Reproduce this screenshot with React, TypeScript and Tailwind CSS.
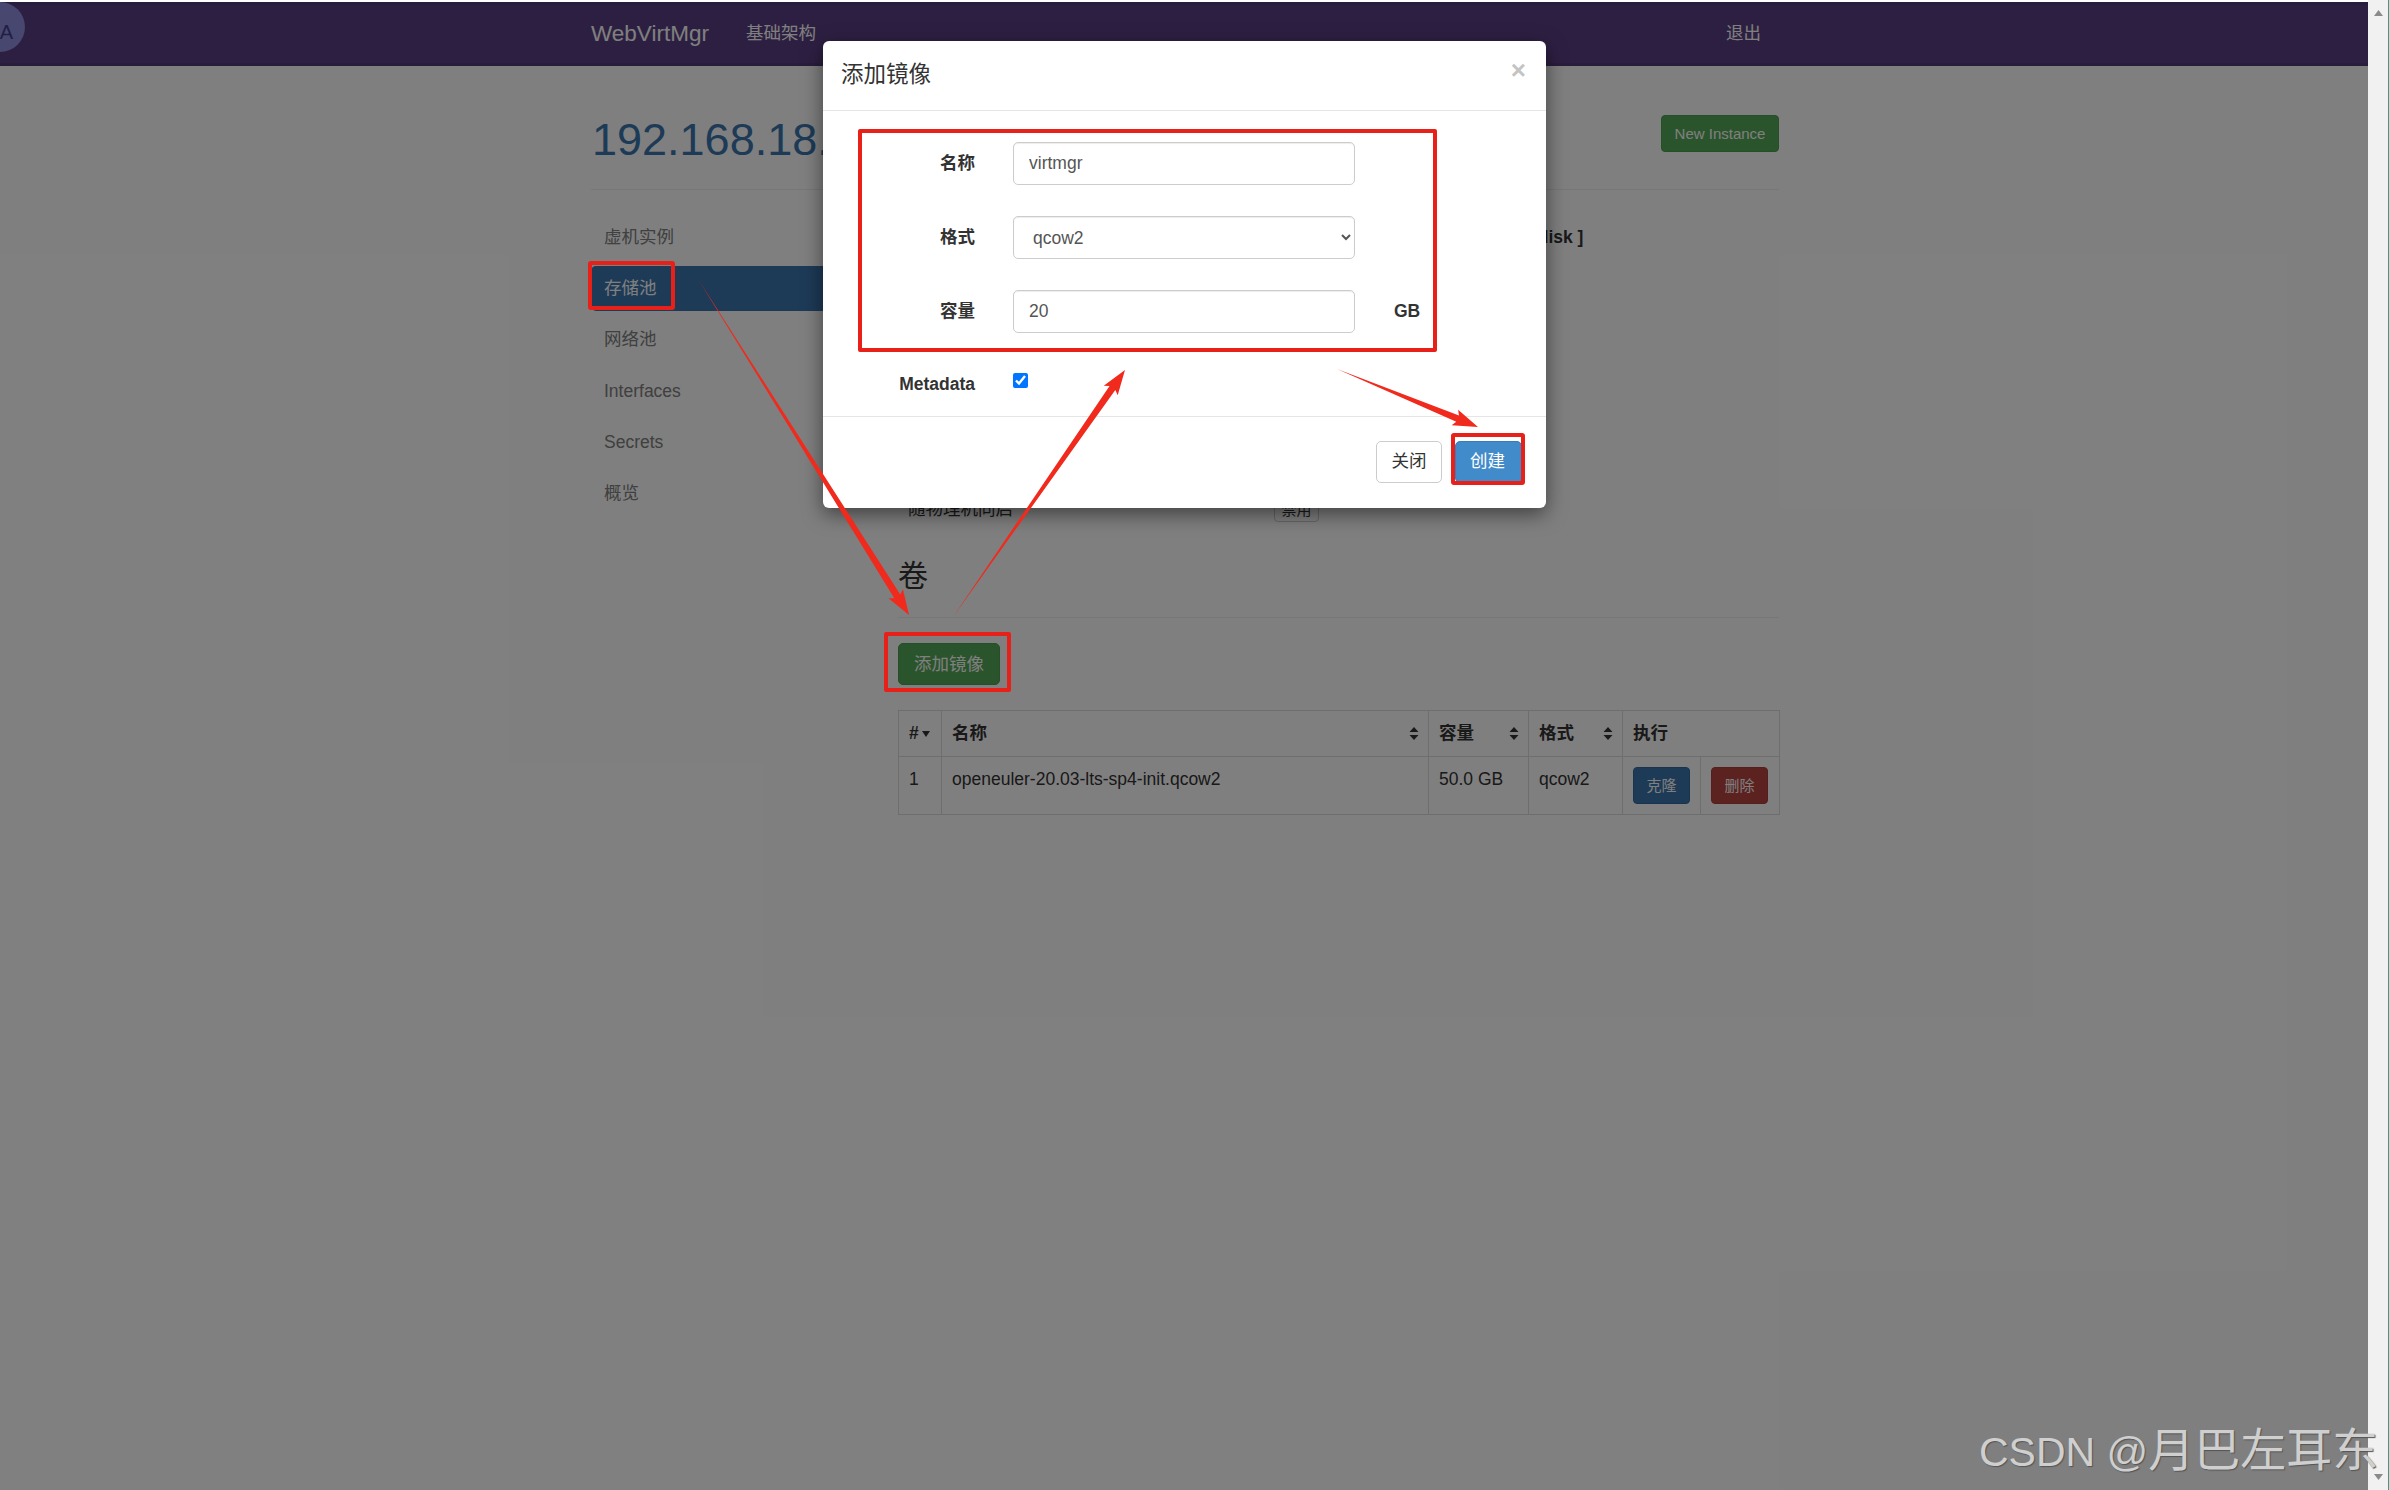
import React from 'react';

const sideItems = ['虚机实例', '存储池', '网络池', 'Interfaces', 'Secrets', '概览'];

function SortIcon() {
  return (
    <svg width="10" height="15" viewBox="0 0 10 15" className="shrink-0 mr-[-1px] text-[#333]">
      <path d="M5 1 L9.5 6 L0.5 6 Z M5 14 L0.5 9 L9.5 9 Z" fill="currentColor" />
    </svg>
  );
}

// tapered annotation arrow: thin at the start, wide near the tip
function Arrow({ x1, y1, x2, y2, w = 7, head = 22 }: { x1: number; y1: number; x2: number; y2: number; w?: number; head?: number }) {
  const len = Math.hypot(x2 - x1, y2 - y1);
  const ux = (x2 - x1) / len;
  const uy = (y2 - y1) / len;
  const nx = -uy;
  const ny = ux;
  const bx = x2 - ux * head;
  const by = y2 - uy * head;
  const pts = [
    [x1, y1],
    [bx + (nx * w) / 2, by + (ny * w) / 2],
    [bx + nx * (w / 2 + 5) - ux * 3, by + ny * (w / 2 + 5) - uy * 3],
    [x2, y2],
    [bx - nx * (w / 2 + 5) - ux * 3, by - ny * (w / 2 + 5) - uy * 3],
    [bx - (nx * w) / 2, by - (ny * w) / 2],
  ];
  return <polygon points={pts.map((p) => p.join(',')).join(' ')} fill="#f02a1c" />;
}

function FieldRow({ label, children, after }: { label: string; children: React.ReactNode; after?: string }) {
  return (
    <div className="flex items-center h-[43px]">
      <label className="w-[152px] text-right font-bold text-[#333]">{label}</label>
      <div className="w-[342px] ml-[38px]">{children}</div>
      {after && <span className="ml-[39px] font-bold text-[#333]">{after}</span>}
    </div>
  );
}

export default function App() {
  const inputCls =
    'w-full h-[43px] px-[15px] border border-[#ccc] rounded-[5px] bg-white text-[17.5px] text-[#555] shadow-[inset_0_1px_1px_rgba(0,0,0,0.075)] outline-none';

  return (
    <div className="relative w-[2389px] h-[1490px] overflow-hidden flex bg-white text-[17.5px] leading-[25px] text-[#333] font-['Liberation_Sans','Noto_Sans_CJK_SC',sans-serif]">
      <div className="relative flex-1 min-w-0">
        <div className="h-[2px] bg-white" />
        <nav className="relative h-[64px] bg-[#5a3e84] border-y-[3px] border-[#523a78] text-white overflow-hidden">
          <div className="ml-[591px] w-[1188px] h-full flex items-center pb-[2px]">
            <span className="text-[22.5px]">WebVirtMgr</span>
            <span className="ml-[37px]">基础架构</span>
            <span className="ml-auto mr-[18px]">退出</span>
          </div>
        </nav>

        <main className="ml-[591px] w-[1188px]">
          <div className="flex items-start justify-between pt-[49px] border-b border-[#eee] h-[124px]">
            <h1 className="pl-[1px] text-[45px] leading-[50px] text-[#3a74ae]">192.168.18.128</h1>
            <button className="h-[37px] w-[118px] bg-[#54a856] border border-[#4c9c4e] rounded-[4px] text-[15px] text-white">New Instance</button>
          </div>

          <div className="flex mt-[25px]">
            <ul className="w-[283px] flex flex-col gap-[6px] shrink-0">
              {sideItems.map((item, i) => (
                <li
                  key={item}
                  className={`h-[45px] flex items-center pl-[13px] rounded-[5px] ${i === 1 ? 'bg-[#3a74ae] text-white' : i > 2 ? 'text-[#808080] translate-y-[1px]' : 'text-[#808080]'}`}
                >
                  {item}
                </li>
              ))}
            </ul>

            <div className="ml-[24px] flex-1 min-w-0">
              <div className="h-[45px] flex items-center pl-[629px] font-bold text-[#333]">[ disk ]</div>
              <div className="mt-[236px] h-[26px] flex items-center">
                <span className="ml-[10px] w-[366px]">随物理机同启</span>
                <button className="h-[26px] w-[45px] border border-[#ccc] rounded-[4px] text-[15px] leading-none">禁用</button>
              </div>

              <h3 className="mt-[37px] text-[30px] leading-[33px]">卷</h3>
              <div className="mt-[25px] h-px bg-[#eee]" />
              <button className="mt-[25px] block w-[102px] h-[42px] bg-[#54a856] border border-[#4c9c4e] rounded-[5px] text-white">添加镜像</button>

              <table className="mt-[25px] w-[881px] table-fixed border-collapse border border-[#ddd]">
                <colgroup>
                  <col className="w-[43px]" />
                  <col className="w-[487px]" />
                  <col className="w-[100px]" />
                  <col className="w-[94px]" />
                  <col className="w-[78px]" />
                  <col className="w-[79px]" />
                </colgroup>
                <thead>
                  <tr className="h-[46px] text-left">
                    <th className="border border-[#ddd] px-[10px] font-bold">
                      <span className="flex items-center gap-[3px]">
                        #
                        <svg width="8" height="6" viewBox="0 0 8 6"><path d="M0 0 H8 L4 6 Z" fill="#333" /></svg>
                      </span>
                    </th>
                    <th className="border border-[#ddd] px-[10px] font-bold">
                      <span className="flex items-center justify-between">名称<SortIcon /></span>
                    </th>
                    <th className="border border-[#ddd] px-[10px] font-bold">
                      <span className="flex items-center justify-between">容量<SortIcon /></span>
                    </th>
                    <th className="border border-[#ddd] px-[10px] font-bold">
                      <span className="flex items-center justify-between">格式<SortIcon /></span>
                    </th>
                    <th colSpan={2} className="border border-[#ddd] px-[10px] font-bold">执行</th>
                  </tr>
                </thead>
                <tbody>
                  <tr className="h-[58px] align-top">
                    <td className="border border-[#ddd] px-[10px] py-[10px]">1</td>
                    <td className="border border-[#ddd] px-[10px] py-[10px]">openeuler-20.03-lts-sp4-init.qcow2</td>
                    <td className="border border-[#ddd] px-[10px] py-[10px]">50.0 GB</td>
                    <td className="border border-[#ddd] px-[10px] py-[10px]">qcow2</td>
                    <td className="border border-[#ddd] px-[10px] py-[10px]">
                      <button className="block w-[57px] h-[37px] bg-[#3a74ae] border border-[#35699e] rounded-[4px] text-[15px] text-white">克隆</button>
                    </td>
                    <td className="border border-[#ddd] px-[10px] py-[10px]">
                      <button className="block w-[57px] h-[37px] bg-[#b84440] border border-[#ab3f3b] rounded-[4px] text-[15px] text-white">删除</button>
                    </td>
                  </tr>
                </tbody>
              </table>
            </div>
          </div>
        </main>

        {/* modal backdrop */}
        <div className="absolute inset-x-0 top-[2px] bottom-0 bg-black/50" />

        {/* translate badge in the corner */}
        <div className="absolute left-[-25px] top-[2px] w-[50px] h-[50px] rounded-full bg-[#47476f] flex items-center justify-end pr-[12px] pt-[10px] text-[20px] text-[#1f1f45] overflow-hidden whitespace-nowrap">文A</div>

        {/* modal */}
        <div className="absolute left-[823px] top-[41px] w-[723px] h-[467px] bg-white rounded-[6px] shadow-[0_6px_20px_rgba(0,0,0,0.5)] flex flex-col">
          <div className="h-[70px] shrink-0 flex items-center justify-between px-[18px] pb-[2px] border-b border-[#e5e5e5]">
            <span className="text-[22.5px] text-[#333]">添加镜像</span>
            <span className="mb-[10px] mr-[2px] text-[26px] font-bold leading-none text-[#c4c4c4]">×</span>
          </div>
          <div className="h-[306px] shrink-0 pt-[31px] flex flex-col gap-[31px] border-b border-[#e5e5e5]">
            <FieldRow label="名称">
              <input readOnly value="virtmgr" className={inputCls} />
            </FieldRow>
            <FieldRow label="格式">
              <select defaultValue="qcow2" className={inputCls}>
                <option value="qcow2">qcow2</option>
              </select>
            </FieldRow>
            <FieldRow label="容量" after="GB">
              <input readOnly value="20" className={inputCls} />
            </FieldRow>
            <div className="flex items-start h-[30px] mt-[-1px]">
              <label className="w-[152px] text-right font-bold mt-[9px]">Metadata</label>
              <input type="checkbox" readOnly checked className="ml-[38px] mt-[10px] w-[15px] h-[15px]" />
            </div>
          </div>
          <div className="flex justify-end gap-[13px] pt-[24px] pr-[24px]">
            <button className="w-[66px] h-[42px] pb-[2px] bg-white border border-[#ccc] rounded-[5px] text-[#333]">关闭</button>
            <button className="w-[67px] h-[42px] pb-[2px] pr-[2px] bg-[#428bca] border border-[#357ebd] rounded-[5px] text-white">创建</button>
          </div>
        </div>
      </div>

      <div className="relative w-[21px] shrink-0 bg-[#f1f1f1] border-r border-[#2aa58a] flex flex-col justify-between items-center py-[10px]">
        <svg width="9" height="6" viewBox="0 0 9 6"><path d="M4.5 0 L9 6 H0 Z" fill="#8a8a8a" /></svg>
        <svg width="9" height="6" viewBox="0 0 9 6"><path d="M0 0 H9 L4.5 6 Z" fill="#8a8a8a" /></svg>
      </div>

      {/* annotations drawn on top of the screenshot */}
      <div className="absolute left-[588px] top-[261px] w-[87px] h-[49px] border-[4px] border-[#e8201a] rounded-[3px]" />
      <div className="absolute left-[858px] top-[129px] w-[579px] h-[223px] border-[4px] border-[#e8201a] rounded-[2px]" />
      <div className="absolute left-[1451px] top-[433px] w-[74px] h-[52px] border-[4px] border-[#e8201a] rounded-[3px]" />
      <div className="absolute left-[884px] top-[632px] w-[127px] h-[60px] border-[4px] border-[#e8201a] rounded-[2px]" />
      <svg className="absolute inset-0 pointer-events-none" width="2389" height="1490">
        <Arrow x1={698} y1={279} x2={909} y2={615} />
        <Arrow x1={953} y1={617} x2={1125} y2={370} />
        <Arrow x1={1337} y1={369} x2={1478} y2={427} />
      </svg>

      <div className="absolute left-[1979px] top-[1422px] whitespace-nowrap text-[41px] leading-[56px] text-[#cfcfcf] [text-shadow:1px_1px_1px_#555]">
        CSDN @<span className="text-[46px]">月巴左耳东</span>
      </div>
    </div>
  );
}
